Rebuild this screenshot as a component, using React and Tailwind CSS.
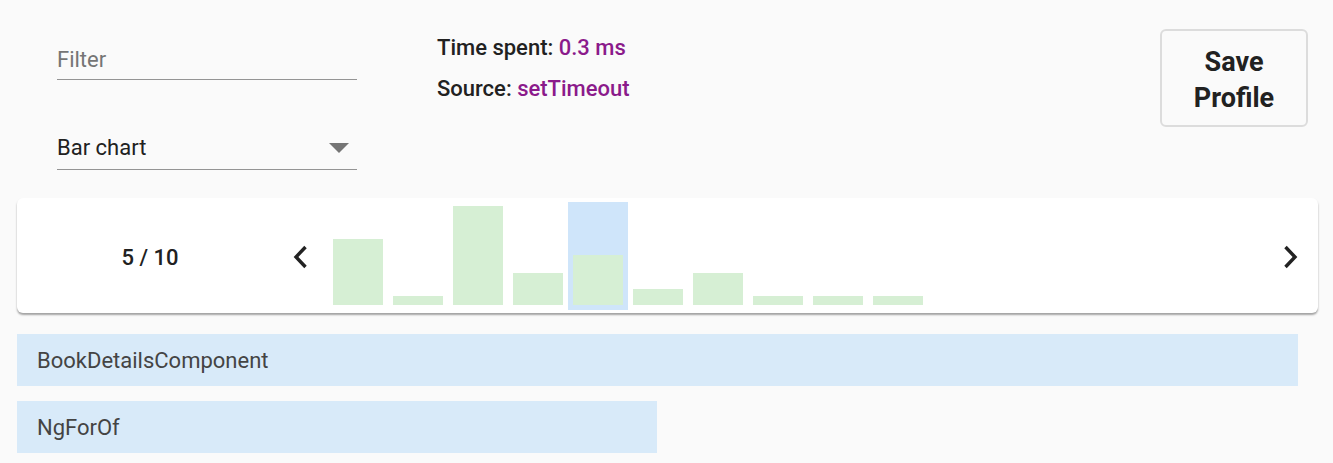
const bars = [66, 9, 99, 32, 50, 16, 32, 9, 9, 9];
const selected = 4;

function Chevron({ dir }) {
	return (
		<svg width="16" height="24" viewBox="0 0 16 24" fill="none">
			<path
				d={dir === "left" ? "M13.5 2 L4 12 L13.5 22" : "M2.5 2 L12 12 L2.5 22"}
				stroke="#222"
				strokeWidth="3.4"
			/>
		</svg>
	);
}

export default function App() {
	return (
		<div className="min-h-[463px] w-[1333px] bg-[#fafafa] font-['Roboto',sans-serif] text-[#212121]">
			<div className="flex pt-[28px]">
				<div className="ml-[57px] w-[300px]">
					<div className="flex h-[52px] flex-col justify-end">
						<div className="pb-[6px] text-[22px] leading-[26px] text-[#757575]">Filter</div>
						<div className="h-[1px] bg-[#949494]"></div>
					</div>
					<div className="mt-[38px] flex h-[52px] flex-col justify-end">
						<div className="flex items-center justify-between pb-[8px] pr-[8px]">
							<span className="text-[22px] leading-[26px]">Bar chart</span>
							<div className="h-0 w-0 border-x-[10px] border-t-[10px] border-x-transparent border-t-[#757575]"></div>
						</div>
						<div className="h-[1px] bg-[#949494]"></div>
					</div>
				</div>
				<div className="ml-[80px] flex flex-col gap-[15px] pt-[7px] text-[22px] font-medium leading-[26px]">
					<div>
						Time spent: <span className="text-[#8b1a8b]">0.3 ms</span>
					</div>
					<div>
						Source: <span className="text-[#8b1a8b]">setTimeout</span>
					</div>
				</div>
				<div className="ml-auto mr-[25px] mt-[1px]">
					<button className="flex h-[98px] w-[148px] flex-col items-center justify-center rounded-[6px] border-2 border-[#dcdcdc] pt-[3px] text-[27px] font-bold leading-[36px] text-[#212121]">
						<span>Save</span>
						<span>Profile</span>
					</button>
				</div>
			</div>

			<div className="ml-[17px] mt-[28px] flex h-[115px] w-[1301px] items-start rounded-[6px] bg-white shadow-[0_2px_2px_rgba(0,0,0,0.35)]">
				<div className="flex h-[115px] w-[266px] items-center justify-center pt-[3px] text-[22px] font-medium">
					5 / 10
				</div>
				<div className="flex h-[115px] w-[45px] items-center justify-start pl-[9px] pt-[3px]">
					<Chevron dir="left" />
				</div>
				<div className="mt-[4px] flex h-[108px]">
					{bars.map((h, i) => (
						<div
							key={i}
							className={
								"flex h-[108px] w-[60px] items-end px-[5px] pb-[5px] " +
								(i === selected ? "bg-[#cfe5fa]" : "")
							}
						>
							<div className="w-[50px] bg-[#d6efd4]" style={{ height: h }}></div>
						</div>
					))}
				</div>
				<div className="ml-auto flex h-[115px] items-center pr-[19px] pt-[3px]">
					<Chevron dir="right" />
				</div>
			</div>

			<div className="ml-[17px] mt-[21px] flex flex-col gap-[15px]">
				<div className="flex h-[52px] w-[1281px] items-center bg-[#d8eaf9] pl-[20px] text-[22px] text-[#444]">
					BookDetailsComponent
				</div>
				<div className="flex h-[52px] w-[640px] items-center bg-[#d8eaf9] pl-[20px] text-[22px] text-[#444]">
					NgForOf
				</div>
			</div>
		</div>
	);
}
